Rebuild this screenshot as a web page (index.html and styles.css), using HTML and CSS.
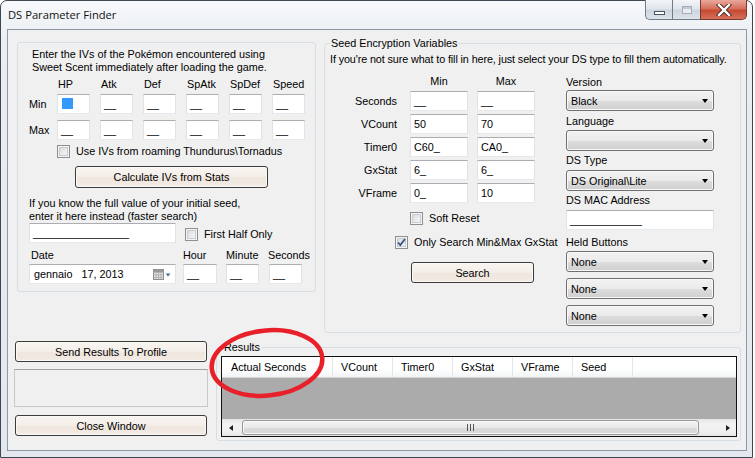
FILE: index.html
```html
<!DOCTYPE html>
<html>
<head>
<meta charset="utf-8">
<title>DS Parameter Finder</title>
<link rel="stylesheet" href="styles.css">
</head>
<body>
<div class="window">
  <div class="titlebar">
    <span class="title">DS Parameter Finder</span>
    <div class="caption">
      <div class="cap-btn cap-min"><span class="min-glyph"></span></div>
      <div class="cap-btn cap-max"><span class="max-glyph"></span></div>
      <div class="cap-btn cap-close">
        <svg width="16" height="12" viewBox="0 0 16 12"><path d="M3 1 L13 11 M13 1 L3 11" stroke="#4a2a24" stroke-width="4.2" stroke-linecap="square"/><path d="M3 1 L13 11 M13 1 L3 11" stroke="#fff" stroke-width="2.4" stroke-linecap="square"/></svg>
      </div>
    </div>
  </div>

  <div class="client">
    <div class="top-row">
      <div class="group iv-group">
        <p class="intro">Enter the IVs of the Pokémon encountered using<br>Sweet Scent immediately after loading the game.</p>
        <div class="iv-row iv-hdr"><span class="rl"></span><span class="hc">HP</span><span class="hc">Atk</span><span class="hc">Def</span><span class="hc">SpAtk</span><span class="hc">SpDef</span><span class="hc">Speed</span></div>
        <div class="iv-row iv-min"><span class="rl">Min</span><span class="tb iv"><span class="sel"></span></span><span class="tb iv">__</span><span class="tb iv">__</span><span class="tb iv">__</span><span class="tb iv">__</span><span class="tb iv">__</span></div>
        <div class="iv-row iv-max"><span class="rl">Max</span><span class="tb iv">__</span><span class="tb iv">__</span><span class="tb iv">__</span><span class="tb iv">__</span><span class="tb iv">__</span><span class="tb iv">__</span></div>
        <div class="check roam"><span class="cb"></span><span>Use IVs from roaming Thundurus\Tornadus</span></div>
        <div class="btn calc">Calculate IVs from Stats</div>
        <p class="seed-text">If you know the full value of your initial seed,<br>enter it here instead (faster search)</p>
        <div class="seed-row">
          <span class="tb seed">________________</span>
          <div class="check half"><span class="cb"></span><span>First Half Only</span></div>
        </div>
        <div class="date-labels"><span class="dl-date">Date</span><span class="dl-hour">Hour</span><span class="dl-min">Minute</span><span class="dl-sec">Seconds</span></div>
        <div class="date-row">
          <div class="tb datepick"><span>gennaio&nbsp;&nbsp; 17, 2013</span>
            <svg class="cal" width="18" height="12" viewBox="0 0 18 12"><rect x="0.5" y="0.5" width="10" height="10" fill="#e4e4e4" stroke="#8a8a8a"/><path d="M0.5 3.5 H10.5 M0.5 6 H10.5 M0.5 8.5 H10.5 M3 3.5 V10.5 M5.5 3.5 V10.5 M8 3.5 V10.5" stroke="#a9a9a9" stroke-width="0.8"/><rect x="0.5" y="0.5" width="10" height="2.5" fill="#9a9a9a"/><path d="M12.5 4.5 H17.5 L15 7.5 Z" fill="#4d6f96"/></svg>
          </div>
          <span class="tb hh">__</span>
          <span class="tb mm">__</span>
          <span class="tb ss">__</span>
        </div>
      </div>

      <fieldset class="group seed-group">
        <legend>Seed Encryption Variables</legend>
        <p class="hint">If you're not sure what to fill in here, just select your DS type to fill them automatically.</p>
        <div class="seed-body">
          <div class="vars">
            <div class="var-grid">
              <span></span><span class="ch">Min</span><span class="ch">Max</span>
              <span class="vl">Seconds</span><span class="tb v">__</span><span class="tb v">__</span>
              <span class="vl">VCount</span><span class="tb v">50</span><span class="tb v">70</span>
              <span class="vl">Timer0</span><span class="tb v">C60_</span><span class="tb v">CA0_</span>
              <span class="vl">GxStat</span><span class="tb v">6_</span><span class="tb v">6_</span>
              <span class="vl">VFrame</span><span class="tb v">0_</span><span class="tb v">10</span>
            </div>
            <div class="check soft"><span class="cb"></span><span>Soft Reset</span></div>
            <div class="check only"><span class="cb checked"><svg width="11" height="11" viewBox="0 0 11 11"><path d="M2 5.5 L4.3 8 L9 2" fill="none" stroke="#3b4f8a" stroke-width="1.8"/></svg></span><span>Only Search Min&amp;Max GxStat</span></div>
            <div class="btn search">Search</div>
          </div>
          <div class="side">
            <span class="sl sl-first">Version</span>
            <div class="combo c1"><span>Black</span><i class="arr"></i></div>
            <span class="sl sl-lang">Language</span>
            <div class="combo c2"><span></span><i class="arr"></i></div>
            <span class="sl sl-type">DS Type</span>
            <div class="combo c3"><span>DS Original\Lite</span><i class="arr"></i></div>
            <span class="sl sl-mac">DS MAC Address</span>
            <span class="tb mac">____________</span>
            <span class="sl sl-held">Held Buttons</span>
            <div class="combo h1"><span>None</span><i class="arr"></i></div>
            <div class="combo h2"><span>None</span><i class="arr"></i></div>
            <div class="combo h3"><span>None</span><i class="arr"></i></div>
          </div>
        </div>
      </fieldset>
    </div>

    <div class="bottom-row">
      <div class="left-col">
        <div class="btn send">Send Results To Profile</div>
        <div class="panel"></div>
        <div class="btn close">Close Window</div>
      </div>
      <fieldset class="group results">
        <legend>Results</legend>
        <div class="listview">
          <div class="lv-head">
            <span class="col c-first">Actual Seconds</span>
            <span class="col">VCount</span>
            <span class="col">Timer0</span>
            <span class="col">GxStat</span>
            <span class="col">VFrame</span>
            <span class="col">Seed</span>
          </div>
          <div class="lv-body"></div>
          <div class="hscroll">
            <span class="sarrow left"></span>
            <div class="strack"><div class="thumb"><span class="grip"></span></div></div>
            <span class="sarrow right"></span>
          </div>
        </div>
      </fieldset>
    </div>
  </div>

  <svg class="annot" width="755" height="458" viewBox="0 0 755 458">
    <ellipse cx="267" cy="363" rx="55.5" ry="32.5" transform="rotate(-6 267 363)" fill="none" stroke="#e8202a" stroke-width="4.5"/>
  </svg>
</div>
</body>
</html>
```
FILE: styles.css
```css
* { box-sizing: border-box; }
html, body { margin: 0; padding: 0; }
body {
  width: 755px; height: 458px; overflow: hidden; background: #ffffff;
  font-family: "Liberation Sans", Arial, sans-serif; font-size: 10.8px; color: #000;
}
p { margin: 0; }
fieldset { margin: 0; padding: 0; min-width: 0; }
legend { margin-left: 0; padding: 0 1px; line-height: 13px; }

.window {
  position: relative;
  width: 753px; height: 458px;
  border: 1px solid #3f4852;
  border-radius: 7px 7px 0 0;
  background: linear-gradient(to bottom, #f7f9fb 0px, #eaeef2 40px, #e3e8ee 100%);
  display: flex; flex-direction: column;
}
.titlebar { height: 28px; display: flex; align-items: flex-start; flex-shrink: 0; }
.title {
  font-family: "Open Sans", "Noto Sans", sans-serif; font-size: 11.2px; line-height: 16px;
  margin: 6px 0 0 7px; color: #111;
}
.caption { margin-left: auto; margin-right: 5px; display: flex; height: 19px; margin-top: -1px; }
.cap-btn { height: 20px; border: 1px solid #6f7c8a; border-top: none; display: flex; align-items: center; justify-content: center; }
.cap-min { width: 27px; border-radius: 0 0 0 5px; border-right: none;
  background: linear-gradient(to bottom, #f3f5f8 0%, #e1e6ec 45%, #cdd5df 55%, #dde3ea 100%); }
.cap-max { width: 28px; border-right: none;
  background: linear-gradient(to bottom, #f3f5f8 0%, #e1e6ec 45%, #cdd5df 55%, #dde3ea 100%); }
.cap-close { width: 47px; border-radius: 0 0 5px 0; border-color: #7a3a30;
  background: linear-gradient(to bottom, #e9a99b 0%, #d66f5b 45%, #c74a33 55%, #d4705b 100%); }
.min-glyph { width: 11px; height: 4px; margin-top: 6px; background: #fff; border: 1px solid #4a5561; }
.max-glyph { width: 10px; height: 8px; border: 1px solid #a4adb7; background: #e9ecf0; box-shadow: inset 0 2px 0 #c4cad2; }
.cap-close svg { display: block; }

.client {
  margin: 0 5px 0 6px;
  height: 422px;
  border: 1px solid #8d99a5;
  background: #f0f0f0;
  display: flex; flex-direction: column;
}
.top-row { display: flex; align-items: flex-start; padding-left: 9px; gap: 8px; }

.group { border: 1px solid #d5dfe5; border-radius: 3px; }

/* ------ IV group ------ */
.iv-group { margin-top: 12px; width: 299px; height: 250px; padding: 0 0 0 11px; display: flex; flex-direction: column; align-items: flex-start; }
.intro { margin: 5px 0 0 3px; line-height: 13px; }
.iv-row { display: flex; gap: 10px; align-items: center; }
.iv-row .rl { width: 18px; }
.iv-hdr { margin-top: 4px; line-height: 13px; }
.hc { width: 33px; padding-left: 1px; }
.iv-min { margin-top: 3px; }
.iv-max { margin-top: 6px; }

.tb {
  display: block; height: 20px; background: #fff;
  border: 1px solid #e2e3ea; border-top-color: #abadb3; border-bottom-color: #e3e9ef;
  line-height: 18px; padding-left: 3px; white-space: nowrap; overflow: hidden;
}
.tb.iv { width: 33px; }
.sel { display: block; width: 11px; height: 11px; margin: 3px 0 0 1px; background: #3399ff; }

.check { display: flex; align-items: center; gap: 6px; line-height: 13px; }
.cb {
  width: 13px; height: 13px; border: 1px solid #8e8f8f; flex-shrink: 0;
  background: linear-gradient(135deg, #d3d5d9 0%, #eceef0 60%, #f6f6f6 100%);
  box-shadow: inset 0 0 0 1px #f4f4f4, inset 0 0 0 2px #c8cbd0;
  display: flex; align-items: center; justify-content: center;
}
.cb.checked svg { display: block; }
.roam { margin: 5px 0 0 28px; }

.btn {
  display: flex; align-items: center; justify-content: center;
  border: 1px solid #3c3c3c; border-radius: 3px;
  background: linear-gradient(to bottom, #f8f5f1 0%, #f4eee8 50%, #efe6dd 51%, #f2ebe4 100%);
  box-shadow: inset 0 0 0 1px #fbf9f6;
}
.calc { margin: 8px 0 0 46px; width: 193px; height: 22px; }

.seed-text { margin-top: 9px; line-height: 13px; }
.seed-row { display: flex; align-items: center; gap: 9px; }
.tb.seed { width: 147px; }
.half { margin-top: 2px; }

.date-labels { display: flex; margin-top: 6px; line-height: 13px; }
.dl-date { width: 154px; padding-left: 2px; }
.dl-hour { width: 43px; }
.dl-min { width: 42px; }
.date-row { display: flex; margin-top: 2px; }
.datepick { width: 147px; display: flex; align-items: center; justify-content: space-between; padding: 0 4px 0 4px; }
.datepick .cal { display: block; margin-top: 1px; }
.tb.hh { width: 34px; margin-left: 7px; }
.tb.mm { width: 33px; margin-left: 9px; }
.tb.ss { width: 33px; margin-left: 10px; }

/* ------ Seed group ------ */
.seed-group { margin-top: 7px; width: 417px; height: 296px; padding: 0 0 0 5px; }
.hint { margin-top: 3px; line-height: 13px; white-space: nowrap; letter-spacing: -0.11px; }
.seed-body { display: flex; margin-top: 9px; }
.vars { width: 236px; display: flex; flex-direction: column; align-items: flex-start; }
.var-grid { display: grid; grid-template-columns: 71px 58px 58px; grid-template-rows: 13px repeat(5, 20px); column-gap: 9px; row-gap: 3px; align-items: center; }
.ch { text-align: center; line-height: 13px; }
.vl { text-align: right; padding-right: 4px; }
.tb.v { width: 58px; }
.soft { margin: 9px 0 0 80px; }
.only { margin: 11px 0 0 65px; }
.search { margin: 13px 0 0 81px; width: 123px; height: 21px; }

.side { width: 148px; display: flex; flex-direction: column; margin-top: 1px; }
.sl { line-height: 13px; }
.sl-lang { margin-top: 4px; }
.sl-type, .sl-mac { margin-top: 3px; }
.sl-held { margin-top: 6px; }
.combo {
  height: 21px; border: 1px solid #707070; border-radius: 3px;
  background: linear-gradient(to bottom, #f2f2f2 0%, #ebebeb 50%, #dddddd 51%, #cfcfcf 100%);
  box-shadow: inset 0 0 0 1px #f8f8f8;
  display: flex; align-items: center; justify-content: space-between; padding: 0 5px 0 4px;
}
.combo .arr { width: 0; height: 0; border-left: 3.5px solid transparent; border-right: 3.5px solid transparent; border-top: 4px solid #000; margin-top: 1px; }
.c1 { margin-top: 1px; }
.c2 { margin-top: 2px; }
.c3 { margin-top: 3px; }
.tb.mac { width: 148px; margin-top: 3px; }
.h1 { margin-top: 2px; }
.h2, .h3 { margin-top: 6px; }

/* ------ bottom ------ */
.bottom-row { display: flex; align-items: flex-start; margin-top: 8px; }
.left-col { margin-left: 7px; width: 192px; display: flex; flex-direction: column; }
.send { height: 21px; }
.panel { margin: 7px 0 0 -1px; width: 194px; height: 38px; border: 1px solid #c9c9c9; border-top-color: #a0a0a0; background: #f0f0f0; }
.close { margin-top: 8px; height: 21px; }

.results { margin-left: 9px; width: 525px; height: 100px; padding: 0 0 0 4px; }
.results legend { margin-left: 2px; }
.listview { margin-top: 2px; width: 516px; height: 81px; border: 1px solid #111; display: flex; flex-direction: column; background: #ababab; }
.lv-head { height: 21px; display: flex; background: linear-gradient(to bottom, #ffffff 0%, #ffffff 60%, #f3f4f6 100%); border-bottom: 1px solid #d5d5d5; flex-shrink: 0; }
.col { width: 60px; height: 100%; border-right: 1px solid #e3e5e8; padding-left: 8px; line-height: 20px; white-space: nowrap; }
.c-first { width: 111px; padding-left: 9px; }
.lv-body { flex: 1; background: #ababab; }
.hscroll { height: 17px; display: flex; align-items: center; background: linear-gradient(to bottom, #e6e6e6, #f2f2f2 30%, #f0f0f0 70%, #e4e4e4); flex-shrink: 0; }
.sarrow { width: 17px; height: 17px; display: flex; align-items: center; justify-content: center; }
.sarrow.left::before { content: ""; border-top: 3.5px solid transparent; border-bottom: 3.5px solid transparent; border-right: 4px solid #222; }
.sarrow.right::before { content: ""; border-top: 3.5px solid transparent; border-bottom: 3.5px solid transparent; border-left: 4px solid #222; }
.strack { flex: 1; height: 17px; display: flex; align-items: center; padding: 0 2px; }
.thumb { width: 457px; height: 15px; margin-left: 1px; border: 1px solid #989898; border-radius: 3px;
  background: linear-gradient(to bottom, #f4f4f4 0%, #e9e9e9 50%, #dadada 51%, #d6d6d6 100%);
  box-shadow: inset 0 0 0 1px #f7f7f7; display: flex; align-items: center; justify-content: center; }
.grip { width: 7px; height: 7px; border-left: 1px solid #555; border-right: 1px solid #555;
  background: linear-gradient(to right, transparent 2px, #555 2px, #555 3px, transparent 3px); }

.annot { position: absolute; left: -1px; top: -1px; pointer-events: none; }
```
